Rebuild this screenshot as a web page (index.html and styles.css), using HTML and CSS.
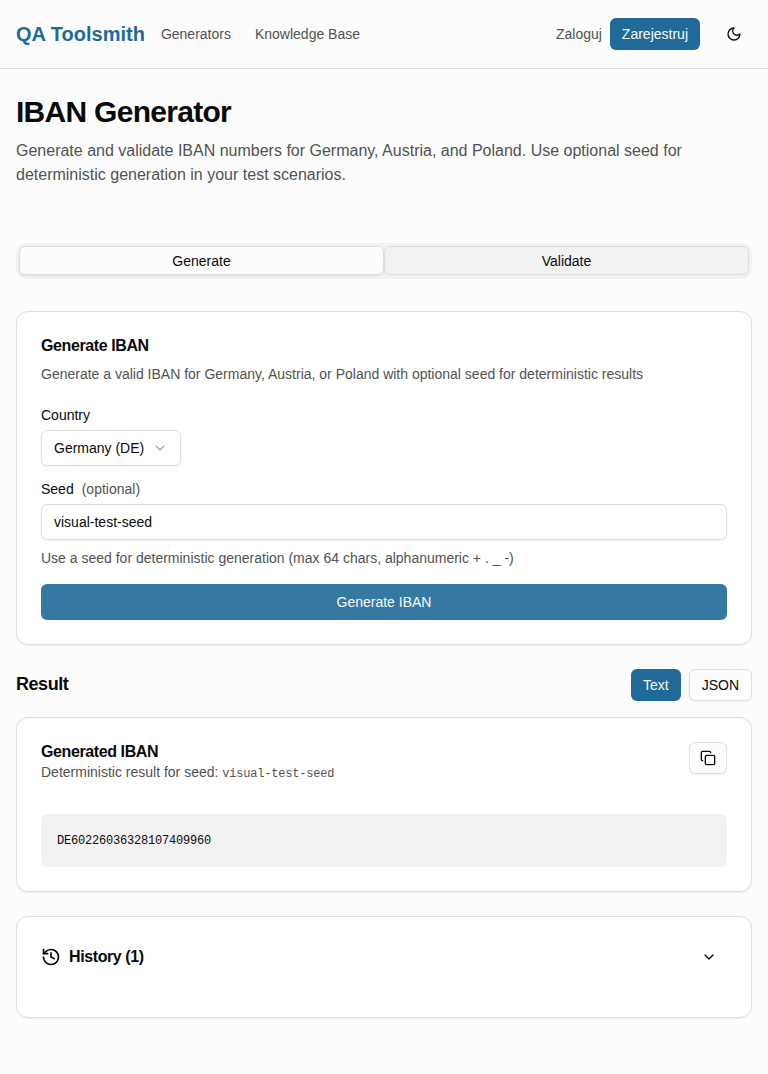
FILE: index.html
```html
<!DOCTYPE html>
<html lang="pl">
<head>
<meta charset="utf-8">
<title>IBAN Generator</title>
<link rel="stylesheet" href="styles.css">
</head>
<body>
<header class="topbar">
  <a class="brand">QA Toolsmith</a>
  <nav class="nav"><a>Generators</a><a>Knowledge Base</a></nav>
  <div class="account">
    <a class="login">Zaloguj</a>
    <a class="btn btn-primary">Zarejestruj</a>
    <span class="theme"><svg width="16" height="16" viewBox="0 0 24 24"><path d="M12 3a6 6 0 0 0 9 9 9 9 0 1 1-9-9Z"/></svg></span>
  </div>
</header>
<main class="page">
  <h1 class="title">IBAN Generator</h1>
  <p class="lead">Generate and validate IBAN numbers for Germany, Austria, and Poland. Use optional seed for deterministic generation in your test scenarios.</p>
  <div class="tabs"><button class="tab active">Generate</button><button class="tab">Validate</button></div>
  <section class="card form">
    <h2 class="card-title">Generate IBAN</h2>
    <p class="muted card-desc">Generate a valid IBAN for Germany, Austria, or Poland with optional seed for deterministic results</p>
    <label class="label">Country</label>
    <div class="select">Germany (DE)<svg class="faded" width="16" height="16" viewBox="0 0 24 24"><path d="m6 9 6 6 6-6"/></svg></div>
    <label class="label">Seed <span class="muted optional">(optional)</span></label>
    <div class="input">visual-test-seed</div>
    <p class="muted hint">Use a seed for deterministic generation (max 64 chars, alphanumeric + . _ -)</p>
    <button class="submit">Generate IBAN</button>
  </section>
  <div class="result-head">
    <h2 class="result-title">Result</h2>
    <button class="btn btn-primary">Text</button>
    <button class="btn btn-outline">JSON</button>
  </div>
  <section class="card result">
    <div class="result-top">
      <div>
        <h3 class="card-title">Generated IBAN</h3>
        <p class="muted seed-line">Deterministic result for seed: <code class="code">visual-test-seed</code></p>
      </div>
      <button class="btn btn-outline copy"><svg width="16" height="16" viewBox="0 0 24 24"><rect width="14" height="14" x="8" y="8" rx="2"/><path d="M4 16c-1.1 0-2-.9-2-2V4c0-1.1.9-2 2-2h10c1.1 0 2 .9 2 2"/></svg></button>
    </div>
    <pre class="output">DE60226036328107409960</pre>
  </section>
  <section class="card history">
    <svg width="20" height="20" viewBox="0 0 24 24"><path d="M3 12a9 9 0 1 0 9-9 9.75 9.75 0 0 0-6.74 2.74L3 8"/><path d="M3 3v5h5"/><path d="M12 7v5l4 2"/></svg>
    <h3 class="card-title">History (1)</h3>
    <svg class="toggle" width="16" height="16" viewBox="0 0 24 24"><path d="m6 9 6 6 6-6"/></svg>
  </section>
</main>
</body>
</html>
```

FILE: styles.css
```css
* { box-sizing: border-box; margin: 0; }
body {
  background: #fcfcfc;
  color: #0a0a0a;
  font: 14px/20px "Liberation Sans", Arial, sans-serif;
}
svg { fill: none; stroke: currentColor; stroke-width: 2; stroke-linecap: round; stroke-linejoin: round; flex: none; }
button { font: inherit; color: inherit; border: 0; padding: 0; }
.topbar { height: 69px; border-bottom: 1px solid #dedede; padding: 0 16px; display: flex; align-items: center; }
.brand { font-size: 20px; line-height: 28px; font-weight: 700; color: #1f6a98; margin-right: 16px; }
.nav { display: flex; gap: 24px; color: #525252; }
.account { display: flex; align-items: center; gap: 8px; margin-left: auto; }
.login { color: #525252; }
.theme { width: 36px; height: 36px; margin-left: 8px; display: grid; place-items: center; }
.btn { height: 32px; border-radius: 6px; padding: 0 12px; display: flex; align-items: center; justify-content: center; }
.btn-primary { background: #1f6a98; color: #fafafa; }
.btn-outline { background: #fcfcfc; border: 1px solid #dedede; box-shadow: 0 1px 2px rgb(0 0 0 / 5%); }
.page { padding: 24px 16px; }
.title { font-size: 30px; line-height: 38px; letter-spacing: -0.72px; margin-bottom: 8px; }
.lead { font-size: 16px; line-height: 24px; color: #525252; }
.muted { color: #525252; }
.tabs { display: flex; height: 36px; padding: 3px 3px 4px; margin-top: 56px; border-radius: 10px; background: #f2f2f2; }
.tab { flex: 1; border: 1px solid #dedede; border-radius: 6px; background: #f2f2f2; }
.tab.active { background: #fcfcfc; box-shadow: 0 1px 2px rgb(0 0 0 / 8%); }
.card { background: #fff; border: 1px solid #dedede; border-radius: 12px; padding: 24px; box-shadow: 0 1px 2px rgb(0 0 0 / 6%); }
.form { height: 334px; margin-top: 32px; display: flex; flex-direction: column; align-items: stretch; }
.card-title { font-size: 16px; line-height: 20px; letter-spacing: -0.4px; }
.card-desc { margin: 8px 0 21px; }
.label { display: flex; gap: 8px; margin-bottom: 5px; }
.select, .input { height: 36px; border: 1px solid #dedede; border-radius: 6px; padding: 0 12px; display: flex; align-items: center; box-shadow: 0 1px 2px rgb(0 0 0 / 5%); }
.select { width: 140px; justify-content: space-between; margin-bottom: 13px; }
.faded { opacity: .5; color: #525252; }
.hint { margin: 8px 0 16px; }
.submit { height: 36px; border-radius: 6px; background: #3579a2; color: #fafafa; }
.result-head { display: flex; align-items: center; gap: 8px; margin: 24px 0 16px; }
.result-title { font-size: 18px; line-height: 28px; letter-spacing: -0.45px; margin-right: auto; padding-bottom: 2px; }
.result { height: 175px; }
.result-top { display: flex; justify-content: space-between; align-items: flex-start; height: 72px; }
.copy { width: 38px; }
.code { font: 12px/16px "Liberation Mono", monospace; letter-spacing: -0.2px; }
.output { height: 53px; padding: 17px 16px 15px; border-radius: 6px; background: #f2f2f2; font: 12px/21px "Liberation Mono", monospace; letter-spacing: -0.2px; }
.history { height: 102px; margin-top: 24px; display: flex; align-items: flex-start; gap: 8px; padding-top: 30px; }
.toggle { margin: 2px 10px 0 auto; }
```
